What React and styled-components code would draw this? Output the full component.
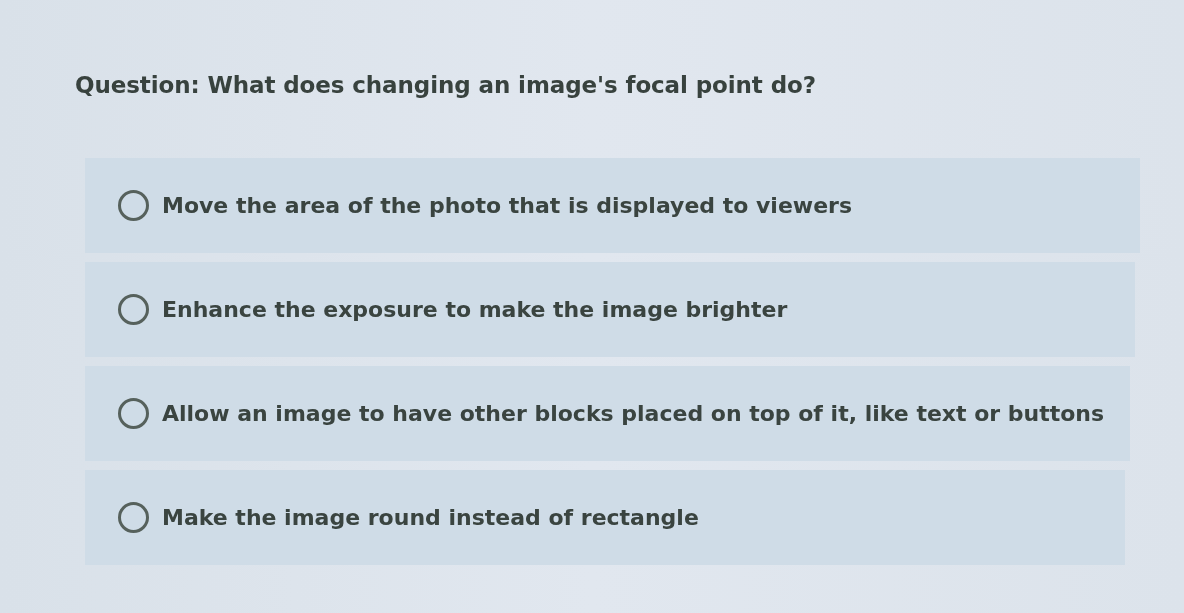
import React, { useState } from "react";
import styled, { createGlobalStyle } from "styled-components";

const GlobalStyle = createGlobalStyle`
  html, body {
    margin: 0;
    padding: 0;
    background: #dde4ec;
  }
  body {
    font-family: "DejaVu Sans", "Liberation Sans", sans-serif;
  }
`;

const Page = styled.div`
  width: 1184px;
  height: 613px;
  box-sizing: border-box;
  padding: 66px 44px 0 75px;
  background: linear-gradient(90deg, #d9e1e9 0%, #e1e7ef 50%, #dce3eb 100%);
  filter: blur(0.7px);
  overflow: hidden;
`;

const Question = styled.h2`
  margin: 0 0 54px;
  font-size: 23px;
  font-weight: 700;
  letter-spacing: -0.1px;
  color: #38423e;
  line-height: 38px;
`;

const Options = styled.div`
  display: flex;
  flex-direction: column;
  gap: 9px;
  padding-left: 10px;
`;

const Option = styled.label`
  display: flex;
  align-items: center;
  gap: 13px;
  height: 95px;
  box-sizing: border-box;
  padding: 0 0 0 33px;
  margin-right: ${(p) => p.$inset}px;
  background: #cfdce7;
  cursor: pointer;
`;

const Radio = styled.span`
  width: 25px;
  height: 25px;
  flex: none;
  border-radius: 50%;
  border: 3px solid #56615c;
  background: ${(p) => (p.$checked ? "#56615c" : "transparent")};
  box-shadow: ${(p) => (p.$checked ? "inset 0 0 0 4px #cfdce7" : "none")};
`;

const Text = styled.span`
  font-size: 22px;
  font-weight: 700;
  letter-spacing: 0;
  color: #3a4440;
`;

const answers = [
  "Move the area of the photo that is displayed to viewers",
  "Enhance the exposure to make the image brighter",
  "Allow an image to have other blocks placed on top of it, like text or buttons",
  "Make the image round instead of rectangle",
];

export default function App() {
  const [picked, setPicked] = useState(null);
  return (
    <>
      <GlobalStyle />
      <Page>
        <Question>Question: What does changing an image's focal point do?</Question>
        <Options>
          {answers.map((a, i) => (
            <Option key={a} $inset={i * 5} onClick={() => setPicked(i)}>
              <Radio $checked={picked === i} />
              <Text>{a}</Text>
            </Option>
          ))}
        </Options>
      </Page>
    </>
  );
}
